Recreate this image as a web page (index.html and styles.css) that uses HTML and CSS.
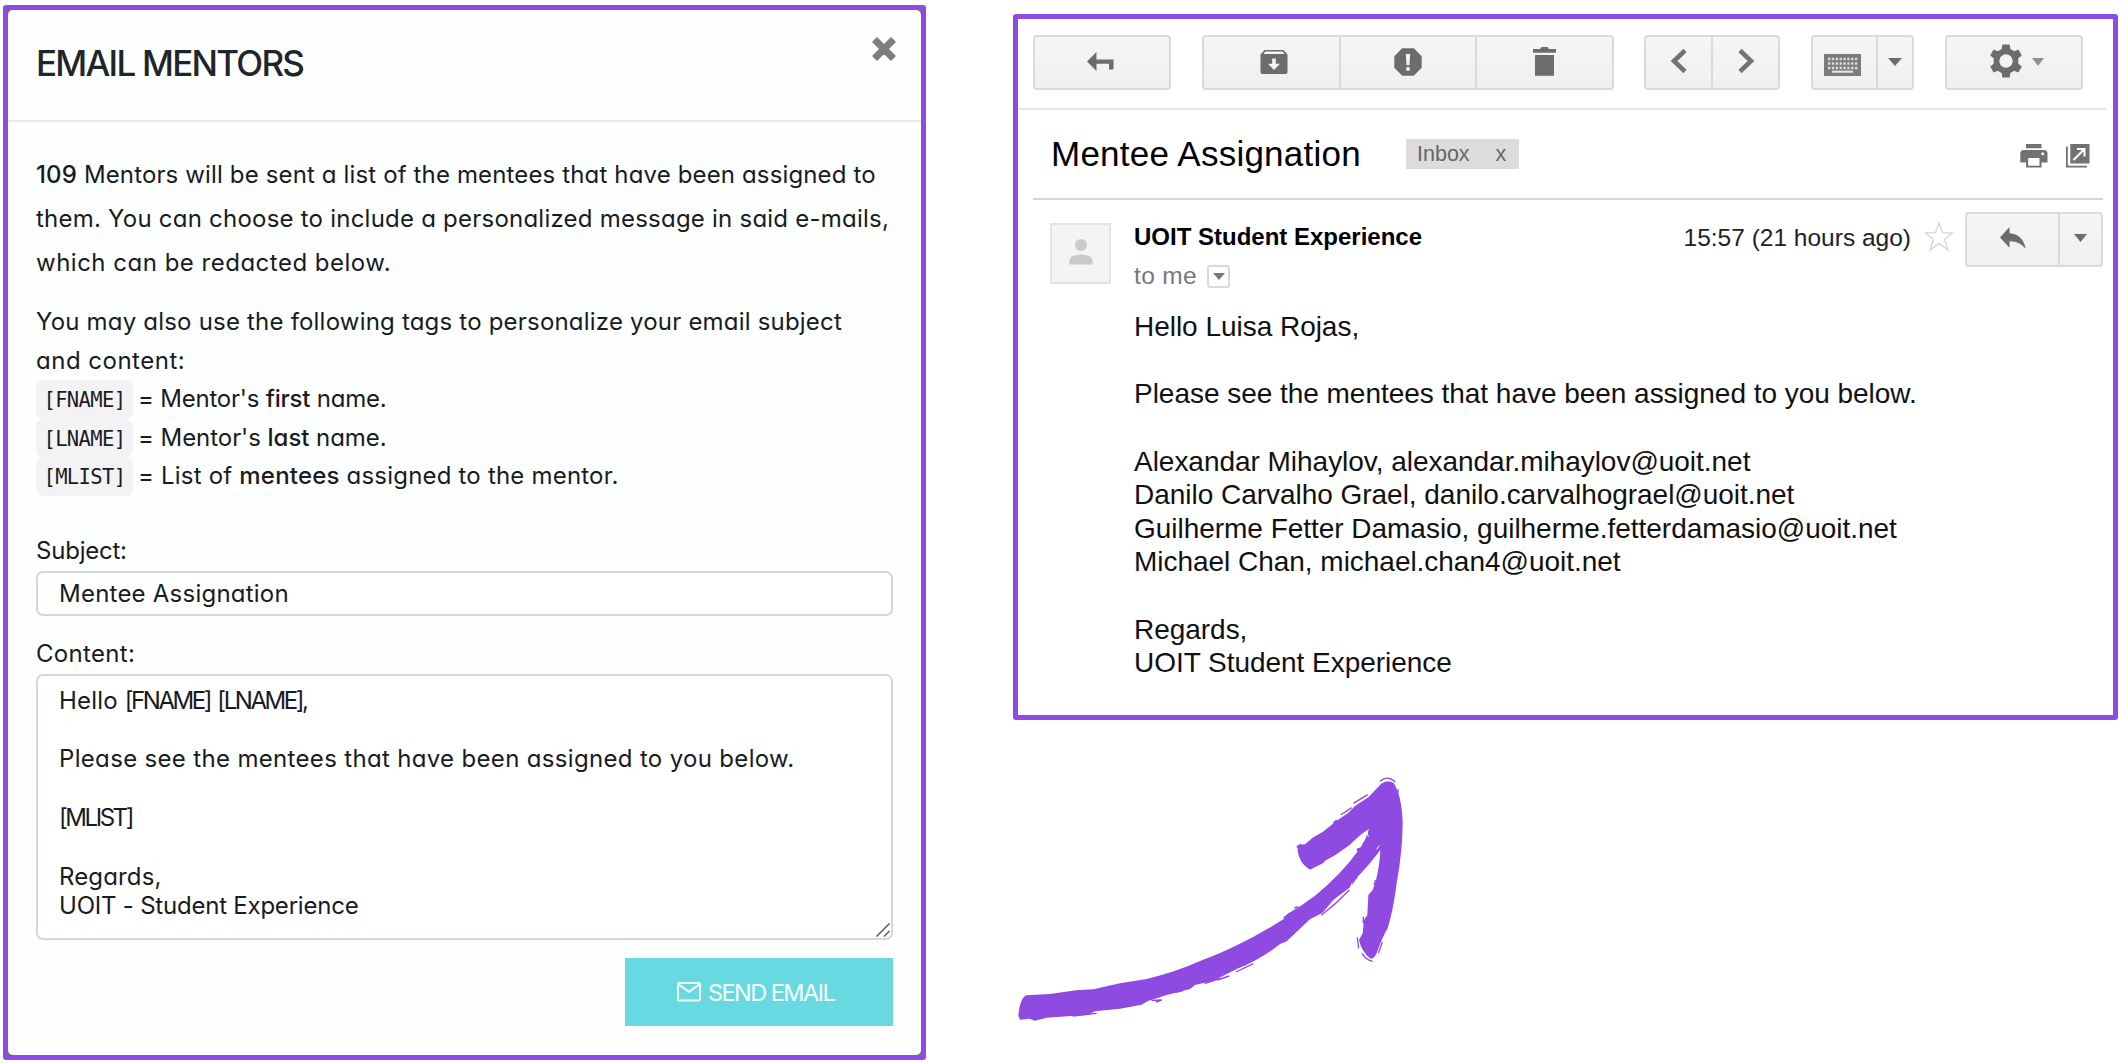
FILE: index.html
```html
<!DOCTYPE html>
<html lang="en">
<head>
<meta charset="utf-8">
<title>Email Mentors</title>
<link rel="stylesheet" href="styles.css">
</head>
<body>
<main class="page">
  <section class="modal">
    <div class="modal-inner">
      <header class="modal-head">
        <h1 class="modal-title">EMAIL MENTORS</h1>
        <svg class="close" width="24" height="24" viewBox="0 0 24 24"><path d="M5 1 L12 8 L19 1 L23 5 L16 12 L23 19 L19 23 L12 16 L5 23 L1 19 L8 12 L1 5 Z" fill="#7d7e80" stroke="#7d7e80" stroke-width="1.5" stroke-linejoin="round"/></svg>
      </header>
      <div class="modal-body">
        <p class="intro">
          <span class="ln t15"><b>109</b> Mentors will be sent a list of the mentees that have been assigned to</span>
          <span class="ln t25">them. You can choose to include a personalized message in said e-mails,</span>
          <span class="ln t50">which can be redacted below.</span>
        </p>
        <p class="tags">
          <span class="ln t20">You may also use the following tags to personalize your email subject</span>
          <span class="ln t50">and content:</span>
        </p>
        <ul class="tag-list">
          <li><code>[FNAME]</code><span class="n20">= Mentor's <b>first</b> name.</span></li>
          <li><code>[LNAME]</code><span class="n05">= Mentor's <b>last</b> name.</span></li>
          <li><code>[MLIST]</code><span class="t20">= List of <b>mentees</b> assigned to the mentor.</span></li>
        </ul>
        <div class="label n20">Subject:</div>
        <div class="field t25">Mentee Assignation</div>
        <div class="label label-content t35">Content:</div>
        <div class="field area">
          <span class="ln t20">Hello <span class="caps">[FNAME] [LNAME],</span></span>
          <span class="ln"></span>
          <span class="ln t35">Please see the mentees that have been assigned to you below.</span>
          <span class="ln"></span>
          <span class="ln caps">[MLIST]</span>
          <span class="ln"></span>
          <span class="ln t15">Regards,</span>
          <span class="ln n20">UOIT - Student Experience</span>
          <svg class="grip" width="14" height="14" viewBox="0 0 14 14"><path d="M0.5 13.5 L13.5 0.5 M8 13.5 L13.5 8" stroke="#55585c" stroke-width="1.5" fill="none"/></svg>
        </div>
        <button class="send">
          <svg width="24" height="20" viewBox="0 0 24 20" fill="none" stroke="#f6ffff" stroke-width="2"><rect x="1" y="1" width="22" height="17.6" rx="1.5"/><path d="M1.8 2.5 L12 9.8 L22.2 2.5"/></svg>
          <span>SEND EMAIL</span>
        </button>
      </div>
    </div>
  </section>

  <div class="right">
    <section class="mail">
      <div class="toolbar">
        <div class="group g-back"><span class="btn"><svg class="back" width="27" height="19" viewBox="0 0 27 19"><path d="M0 9.5 L9.5 0 V7.4 H26.5 V17.4 H22 V11.7 H9.5 V19 Z"/></svg></span></div>
        <div class="group g-act">
          <span class="btn"><svg class="archive" width="28" height="24" viewBox="0 0 28 24"><path fill-rule="evenodd" d="M4.5 0 H23.5 L27.5 4.5 V22 Q27.5 24 25.5 24 H2.5 Q0.5 24 0.5 22 V4.5 Z M5.3 1.6 L3.6 4 H24.4 L22.7 1.6 Z M12.2 8.5 V13.7 H8 L14 20 L20 13.7 H15.8 V8.5 Z"/></svg></span>
          <span class="btn"><svg width="28" height="28" viewBox="0 0 28 28"><path fill-rule="evenodd" d="M8.2 0.3 H19.8 L27.7 8.2 V19.8 L19.8 27.7 H8.2 L0.3 19.8 V8.2 Z M11.8 6 L12.5 17.2 H15.5 L16.2 6 Z M14 19 A2 2 0 1 0 14 23 A2 2 0 1 0 14 19 Z"/></svg></span>
          <span class="btn"><svg class="up" width="23" height="29" viewBox="0 0 23 29"><path d="M0 2 H7 L8.5 0 H14.5 L16 2 H23 V5.7 H0 Z M2 8 H21 V28.7 H2 Z"/></svg></span>
        </div>
        <div class="group g-nav">
          <span class="btn"><svg class="up" width="18" height="26" viewBox="0 0 18 26"><path class="stroke" d="M15 2.5 L4 13 L15 23.5"/></svg></span>
          <span class="btn"><svg class="up" width="18" height="26" viewBox="0 0 18 26"><path class="stroke" d="M3 2.5 L14 13 L3 23.5"/></svg></span>
        </div>
        <div class="group g-kbd">
          <span class="btn"><svg class="kbd" width="37" height="22" viewBox="0 0 37 22"><rect width="37" height="22" fill="#7c7c7c"/><path d="M4 5 H33.500 M4 9.500 H33.500 M4 14 H33.500" stroke="#dcdcdc" stroke-width="2.600" stroke-dasharray="2.300 1.550"/><path d="M8 17.700 H29" stroke="#e8e8e8" stroke-width="2"/></svg></span>
          <span class="btn"><svg width="14" height="8" viewBox="0 0 14 8"><path d="M0 0 H14 L7 8 Z"/></svg></span>
        </div>
        <div class="group g-gear">
          <span class="btn">
            <svg class="gear" width="32" height="34" viewBox="-16 -17 32 34"><path fill-rule="evenodd" d="M-3.600 -16.500 H3.600 L4.400 -12 L8.200 -9.800 L12.400 -11.600 L15.800 -5.500 L12.300 -2.700 V2.700 L15.800 5.500 L12.400 11.600 L8.200 9.800 L4.400 12 L3.600 16.500 H-3.600 L-4.400 12 L-8.200 9.800 L-12.400 11.600 L-15.800 5.500 L-12.300 2.700 V-2.700 L-15.800 -5.500 L-12.400 -11.600 L-8.200 -9.800 L-4.400 -12 Z M0 -6.700 A6.700 6.700 0 1 0 0 6.700 A6.700 6.700 0 1 0 0 -6.700 Z"/></svg>
            <svg class="pale" width="12" height="8" viewBox="0 0 12 8"><path d="M0 0 H12 L6 8 Z"/></svg>
          </span>
        </div>
      </div>
      <div class="subject">
        <h2>Mentee Assignation</h2>
        <span class="inbox"><span>Inbox</span><span>x</span></span>
        <svg class="print" width="28" height="24" viewBox="0 0 28 24"><path fill-rule="evenodd" d="M6 0 H21.500 V4.300 H6 Z M3.500 6 H24 Q27.500 6 27.500 9.500 V18.500 H21.500 V23.500 H6 V18.500 H0.300 V9.500 Q0.300 6 3.500 6 Z M8.200 14 V21.800 H19.500 V14 Z M22.800 8.200 A1.500 1.500 0 1 0 22.800 11.200 A1.500 1.500 0 1 0 22.800 8.200 Z"/></svg>
        <svg class="popout" width="24" height="24" viewBox="0 0 24 24"><path d="M0 2.500 H1.800 V21.800 H21 V23.600 H0 Z M4.300 0 H23.500 V19.500 H4.300 Z"/><path d="M7.500 16 L18 5.500 M11 5 H18.500 V12.500" fill="none" stroke="#fff" stroke-width="2"/></svg>
      </div>
      <div class="message">
        <div class="avatar"><svg width="24" height="26" viewBox="0 0 24 26"><circle cx="12" cy="6" r="6"/><path d="M0.300 25.500 V21.500 Q1 16 12 15.500 Q23 16 23.700 21.500 V25.500 Z"/></svg></div>
        <div class="content">
          <div class="meta">
            <div>
              <div class="from">UOIT Student Experience</div>
              <div class="to">to me <span class="drop"><svg width="12" height="7" viewBox="0 0 12 7"><path d="M0 0 H12 L6 7 Z"/></svg></span></div>
            </div>
            <div class="when">
              <span class="time">15:57 (21 hours ago)</span>
              <svg class="star" width="30" height="31" viewBox="0 0 30 31"><path d="M15 2 L18.600 11.700 L28.500 12 L20.700 18.400 L24 29 L15 22.600 L6 29 L9.300 18.400 L1.500 12 L11.400 11.700 Z" fill="#fff" stroke="#d2d2d2" stroke-width="1.200"/></svg>
              <div class="group g-reply">
                <span class="btn"><svg class="rep" width="26" height="22" viewBox="0 0 26 22"><path d="M0 10.500 L9.500 0 V6.200 Q22.500 7 25.800 21.700 Q19.500 13.800 9.500 14.200 V20.700 Z"/></svg></span>
                <span class="btn"><svg class="rep" width="13" height="8" viewBox="0 0 13 8"><path d="M0 0 H13 L6.500 8 Z"/></svg></span>
              </div>
            </div>
          </div>
          <div class="text">Hello Luisa Rojas,<br><br>Please see the mentees that have been assigned to you below.<br><br>Alexandar Mihaylov, alexandar.mihaylov@uoit.net<br>Danilo Carvalho Grael, danilo.carvalhograel@uoit.net<br>Guilherme Fetter Damasio, guilherme.fetterdamasio@uoit.net<br>Michael Chan, michael.chan4@uoit.net<br><br>Regards,<br>UOIT Student Experience</div>
        </div>
      </div>
    </section>
    <svg class="arrow" width="430" height="280" viewBox="0 0 1290 840">
      <path fill="#8f4ae2" d="M78 706 L150 702 L228 691 L280 688 L360 670 L440 657 Q530 635 600 603 Q720 560 850 478 L862 462 L905 436 L948 405 Q1030 335 1072 275 L1070 266 L1082 262 Q1098 238 1107 207 Q1090 215 1050 254 L1005 286 L975 302 L970 309 L930 329 Q890 305 893 255 L915 253 L940 232 L968 216 L1010 182 L1045 158 L1065 138 L1105 112 L1143 72 Q1162 57 1182 70 L1193 92 Q1206 130 1208 185 Q1208 270 1190 370 Q1180 450 1163 505 Q1145 535 1130 580 Q1120 600 1110 595 Q1085 575 1077 540 L1088 520 L1092 480 L1102 465 L1105 405 L1118 390 L1127 365 Q1140 310 1141 270 Q1100 325 1055 368 L1050 382 L1000 420 L968 458 L930 478 L860 544 L840 552 Q780 600 715 625 L640 662 L585 675 L570 687 L500 705 L442 724 L425 734 L360 746 L285 754 L265 764 L140 773 L105 782 L88 776 L60 779 L55 768 Q60 715 78 706 Z"/>
      <path fill="none" stroke="#8f4ae2" stroke-width="4" d="M1140 64 Q1162 44 1186 66 M1060 130 L1103 104 M1022 165 L1055 143 M1000 190 L1010 180 M964 466 Q1010 430 1048 390 M1055 372 L1072 350 M1122 375 L1127 360 M1072 532 L1076 565 M1086 580 Q1098 600 1118 604 M1135 580 L1147 546 M614 671 L660 655 M652 660 L688 648 M708 636 L760 611 M526 698 L550 691 M455 721 L485 720 L468 726 M218 768 L290 760 M883 444 L895 440 M850 474 L868 462 M1090 490 V470 M904 252 L890 262 M1193 100 L1195 88"/>
      <path fill="none" stroke="#fff" stroke-width="3" d="M1101 216 L1105 230 M1130 268 L1138 256"/>
    </svg>
  </div>
</main>
</body>
</html>
```
FILE: styles.css
```css
* { box-sizing: border-box; }
body { margin: 0; background: #fff; }
h1, h2, p, ul { margin: 0; padding: 0; }
svg { display: block; flex: none; }

.page { display: flex; align-items: flex-start; width: 2122px; height: 1064px; overflow: hidden; }

/* Compose dialog */
.modal {
  width: 923px; height: 1055px; margin: 5px 0 0 3px;
  border: 5px solid #8f4ae2; border-radius: 3px; background: #77757c;
  font-family: Inter, "Open Sans", sans-serif; font-size: 24px;
  font-feature-settings: "cv11"; color: #191b1e;
}
.modal-inner { height: 100%; border-radius: 5px; background: #fdffff; }
.modal-head {
  display: flex; justify-content: space-between; height: 112px;
  padding: 32px 22px 0 28px; border-bottom: 2px solid #e5e9ea;
}
.modal-title { font-size: 35px; line-height: 42px; font-weight: 500; letter-spacing: -1.75px; color: #212529; }
.close { margin-top: -5px; margin-right: 3px; }
.modal-body { display: flex; flex-direction: column; padding: 31px 28px 0 28px; }
.modal-body b { font-weight: 500; }
.ln { display: block; white-space: nowrap; }
.intro { line-height: 44px; }
.tags { margin-top: 18px; line-height: 38.5px; }
.tag-list { list-style: none; line-height: 38.5px; }
.tag-list li { display: flex; gap: 5px; white-space: nowrap; }
code {
  width: 97px; height: 38.5px; border-radius: 7px; background: #f3f3f5;
  font: 20.5px/40.5px "DejaVu Sans Mono", monospace; letter-spacing: -0.6px;
  text-align: center;
}
.label { margin-top: 37px; line-height: 36px; }
.label-content { margin-top: 20px; }
.field {
  height: 45px; margin-top: 2px; padding-left: 21px; line-height: 41px;
  border: 2px solid #d3d7dc; border-radius: 7px; background: #fff;
}
.area { position: relative; height: 266px; padding-top: 10px; line-height: 29.4px; }
.area .ln { height: 29.4px; }
.grip { position: absolute; right: 1px; bottom: 1px; }
.send {
  display: flex; align-items: center; align-self: flex-end; gap: 7px;
  width: 268px; height: 68px; margin-top: 18px; padding: 1px 0 0 52px;
  border: 0; background: #69d9e1; color: #f6ffff;
  font: 23.5px Inter, sans-serif; letter-spacing: -1.55px; white-space: nowrap;
}
.t15 { letter-spacing: 0.14px; }
.t20 { letter-spacing: 0.2px; }
.t25 { letter-spacing: 0.23px; }
.t35 { letter-spacing: 0.33px; }
.t50 { letter-spacing: 0.5px; }
.n05 { letter-spacing: -0.05px; }
.n20 { letter-spacing: -0.22px; }
.caps { letter-spacing: -2.45px; word-spacing: 3px; }

/* Received mail */
.right { margin: 14px 0 0 87px; }
.mail {
  width: 1105px; height: 706px; border: 5px solid #8f4ae2; border-radius: 3px;
  background: #fff; font-family: "Liberation Sans", Arial, sans-serif; color: #000;
}
.toolbar {
  display: flex; height: 91px; margin-right: 7px; padding: 16px 0 0 15px;
  border-bottom: 2px solid #e5e5e5;
}
.group {
  display: flex; height: 55px; border: 2px solid #dadada; border-radius: 4px;
  background: linear-gradient(#f5f5f5, #f0f0f0);
}
.btn { display: flex; flex: 1; align-items: center; justify-content: center; fill: #6c6c6c; }
.btn + .btn { border-left: 2px solid #dadada; }
.btn svg { margin-bottom: 2px; }
.btn svg.up { margin-bottom: 3px; }
.btn svg.kbd { margin: 4px 4px 0 0; }
.btn svg.rep { margin-bottom: 4px; }
.btn svg.back { margin-right: 3px; }
.btn svg.archive { margin-left: 5px; }
.stroke { fill: none; stroke: #737373; stroke-width: 4.6; }
.g-back { width: 138px; }
.g-act { width: 412px; margin-left: 31px; }
.g-nav { width: 136px; margin-left: 30px; }
.g-kbd { width: 103px; margin-left: 31px; }
.g-kbd .btn + .btn { flex: 0 0 36px; }
.g-gear { width: 138px; margin-left: 31px; }
.g-gear .btn { gap: 10px; padding-left: 5px; }
.btn svg.gear { margin-bottom: 3px; }
.pale { fill: #8f8f8f; }

.subject {
  display: flex; align-items: center; height: 90px; margin: 0 10px 0 15px;
  padding: 0 13px 0 18px; border-bottom: 2px solid #d8d8d8; fill: #717171;
}
.subject h2 { width: 355px; font-size: 35px; font-weight: 400; letter-spacing: 0.25px; white-space: nowrap; }
.inbox {
  display: flex; gap: 26px; width: 113px; height: 30px; padding-left: 11px;
  background: #dcdcdc; color: #666; font-size: 21.5px; line-height: 31px;
}
.print { margin: 3px 18px 0 auto; }
.popout { margin-top: 3px; }

.message { display: flex; margin: 0 10px 0 32px; }
.avatar {
  display: flex; align-items: center; justify-content: center; flex: none;
  width: 61px; height: 61px; margin: 23px 23px 0 0; padding-bottom: 3px;
  border: 2px solid #e4e4e4; background: #f4f4f4; fill: #cacaca;
}
.content { flex: 1; }
.meta { display: flex; justify-content: space-between; height: 98px; }
.from { margin-top: 20px; font-size: 24px; line-height: 34px; font-weight: 700; }
.to { display: flex; align-items: center; gap: 10px; font-size: 24.5px; line-height: 44px; letter-spacing: 0.35px; color: #777; }
.drop {
  display: flex; align-items: center; justify-content: center;
  width: 23px; height: 23px; border: 2px solid #d9d9d9; border-radius: 3px; fill: #777;
}
.when { display: flex; align-items: flex-start; padding-top: 12px; }
.time { margin-top: 8px; font-size: 24.5px; line-height: 36px; color: #222; }
.star { margin: 9px 11px 0 13px; }
.g-reply { width: 138px; }
.g-reply .btn + .btn { flex: 0 0 43px; }
.text { margin-top: 12.3px; font-size: 28px; line-height: 33.6px; letter-spacing: -0.03px; white-space: nowrap; color: #111; }
.arrow { margin: 40px 0 0 -13px; }
```
